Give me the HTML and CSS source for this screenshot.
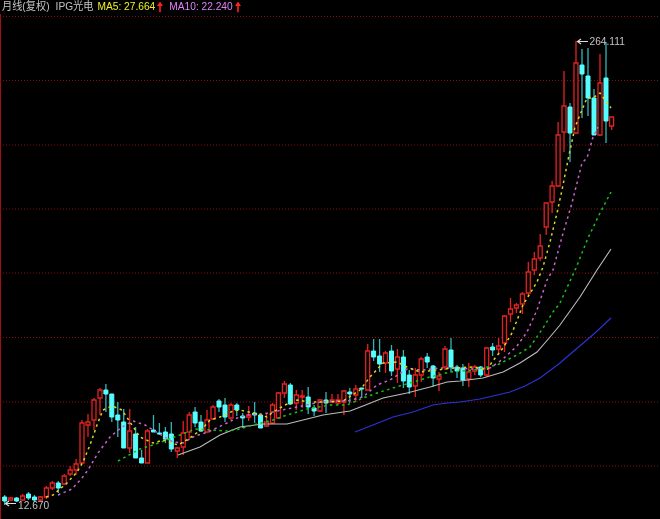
FILE: index.html
```html
<!DOCTYPE html>
<html lang="zh">
<head>
<meta charset="utf-8">
<title>IPG光电 月线</title>
<link rel="stylesheet" href="styles.css">
</head>
<body>
<main class="chart">
  <svg class="plot" width="660" height="519" viewBox="0 0 660 519">
    <path class="axis" d="M0.5 14V519"/>
    <path class="grid" d="M0 16.5H660M0 80.5H660M0 145H660M0 209H660M0 273H660M0 337.5H660M0 402H660M0 466H660"/>
    <path class="wick-up" d="M10.7 497V501M22.6 494V501M40.4 496V501M46.4 486V499M52.3 481V490M64.2 474V485M70.2 466V476M76.1 459V475M82 420V464M88 414V437M94 398V430M100 388V415M129.7 409V453M147.5 429V463M177.3 447V458M183.2 421V455M189.2 412V440M207 410V433M213 405V420M231 403V420M248.7 406V421M266.5 414V427M272.5 403V424M278.4 392V419M284.4 381V398M296.3 390V410M302.2 390V408M320 399V412M332 394V403M338 394V405M343.9 390V415M355.8 385V402M367.7 344V390M385.5 351V373M397.4 349V383M415.3 368V397M421.2 357V382M439 372V391M445 346V370M468.8 363V387M474.8 365V375M486.7 347V377M498.6 338V355M504.5 315V352M510.5 298V322M516.4 303V313M522.4 292V314M528.3 262V297M534.3 252V275M540.2 234V261M546.2 203V235M552.1 181V213M558.1 122V187M564 71V152M576 41V134M600 54V136M611.6 117V130"/>
    <path class="wick-down" d="M4.7 495V505M16.6 497V502M28.5 492V500M34.5 495V502M58.3 481V493M105.9 384V412M111.8 394V422M117.8 402V437M123.7 409V448M135.6 427V458M141.6 450V463M153.5 415V432M159.4 423V435M165.4 427V443M171.3 422V452M195.1 407V427M201 415V432M219 399V412M225 398V422M236.8 403V416M242.7 413V428M254.6 402V423M260.6 413V428M290.3 383V405M308.2 387V414M314.1 405V416M326 392V413M349.8 388V403M361.7 388V398M373.6 339V361M379.6 339V372M391.5 345V376M403.4 350V388M409.3 370V394M427.2 353V368M433.1 365V387M451 338V372M457 365V378M462.9 364V386M480.7 366V377M492.6 343V356M570 103V162M582 49V118M588 48V116M594 89V135M606 42V143"/>
    <path class="body-up" d="M8.7 498h4v2h-4zM20.6 496h4v4h-4zM38.4 497h4v3h-4zM44.4 488h4v9h-4zM50.3 483h4v5h-4zM62.2 476h4v8h-4zM68.2 470h4v4h-4zM74.1 464h4v6h-4zM80 423h4v40h-4zM86 422h4v3h-4zM92 400h4v20h-4zM98 390h4v8h-4zM127.7 431h4v17h-4zM145.5 431h4v32h-4zM175.3 448h4v3h-4zM181.2 433h4v14h-4zM187.2 415h4v17h-4zM205 420h4v12h-4zM211 407h4v12h-4zM229 405h4v13h-4zM246.7 415h4v2h-4zM264.5 422h4v4h-4zM270.5 405h4v18h-4zM276.4 393h4v25h-4zM282.4 384h4v9h-4zM294.3 395h4v8h-4zM300.2 396h4v1h-4zM318 400h4v11h-4zM330 400h4v2h-4zM336 400h4v3h-4zM341.9 391h4v11h-4zM353.8 389h4v6h-4zM365.7 351h4v39h-4zM383.5 353h4v10h-4zM395.4 357h4v12h-4zM413.3 375h4v11h-4zM419.2 359h4v16h-4zM437 376h4v3h-4zM443 349h4v18h-4zM466.8 372h4v7h-4zM472.8 367h4v4h-4zM484.7 348h4v27h-4zM496.6 346h4v3h-4zM502.5 316h4v27h-4zM508.5 309h4v5h-4zM514.4 305h4v3h-4zM520.4 294h4v10h-4zM526.3 272h4v21h-4zM532.3 259h4v11h-4zM538.2 246h4v12h-4zM544.2 203h4v24h-4zM550.1 186h4v16h-4zM556.1 135h4v51h-4zM562 106h4v26h-4zM574 63h4v70h-4zM598 83h4v52h-4zM609.6 117h4v9h-4z"/>
    <path class="body-down" d="M2.7 497h4v4h-4zM14.6 498h4v3h-4zM26.5 494h4v4h-4zM32.5 497h4v3h-4zM56.3 483h4v5h-4zM103.9 390h4v4h-4zM109.8 394h4v23h-4zM115.8 415h4v5h-4zM121.7 422h4v26h-4zM133.6 434h4v24h-4zM139.6 458h4v5h-4zM151.5 430h4v2h-4zM157.4 433h4v1h-4zM163.4 432h4v7h-4zM169.3 434h4v15h-4zM193.1 412h4v11h-4zM199 422h4v9h-4zM217 401h4v6h-4zM223 405h4v12h-4zM234.8 405h4v5h-4zM240.7 416h4v2h-4zM252.6 413h4v2h-4zM258.6 415h4v13h-4zM288.3 385h4v19h-4zM306.2 397h4v10h-4zM312.1 408h4v3h-4zM324 400h4v3h-4zM347.8 392h4v2h-4zM359.7 388h4v1h-4zM371.6 351h4v6h-4zM377.6 356h4v8h-4zM389.5 351h4v20h-4zM401.4 357h4v24h-4zM407.3 375h4v12h-4zM425.2 357h4v5h-4zM431.1 366h4v12h-4zM449 350h4v17h-4zM455 367h4v4h-4zM460.9 368h4v12h-4zM478.7 367h4v8h-4zM490.6 347h4v3h-4zM568 107h4v26h-4zM580 65h4v9h-4zM586 76h4v22h-4zM592 98h4v37h-4zM604 78h4v43h-4z"/>
    <polyline class="line ma60" points="355,432 373,425 393,417 413,412 433,405 447,403 460,402 480,399 510,392 525,386 540,378 560,363 575,350 595,333 611,318"/>
    <polyline class="line ma30" points="178,455 200,447 220,435 240,427 263,424 287,424 303,420 323,415 350,411 363,406 383,398 407,393 430,387 447,382 460,381 483,378 503,372 520,363 537,352 550,337 560,325 580,297 597,270 611,249"/>
    <polyline class="line dash ma20" points="118,461 140,449 153,445 180,435 195,429 210,430 227,431 240,429 253,425 273,420 287,415 307,409 330,405 347,405 363,398 377,393 393,388 413,382 430,377 450,372 473,370 497,365 517,355 530,347 543,328 553,312 560,303 576,268 588,238 600,213 611,192"/>
    <polyline class="line dash ma10" points="58,495 72,489 82,478 88,470 98,453 110,437 122,427 133,421 145,425 158,433 173,442 183,443 195,436 208,432 227,423 237,418 247,415 263,414 273,412 287,409 302,406 320,402 337,401 347,401 363,397 377,385 390,380 407,369 423,370 440,368 453,368 473,369 490,368 503,359 517,346 527,332 537,310 547,280 553,270 562,237 572,203 582,163 587,158 593,137 598,127"/>
    <polyline class="line dash ma5" points="46,497 53,495 67,483 77,472 83,462 90,445 97,425 103,410 112,406 122,410 130,422 140,437 153,443 163,440 178,445 190,438 203,428 210,420 220,417 233,411 240,410 253,413 267,417 273,412 285,405 297,400 310,402 327,402 343,401 360,390 370,377 383,363 397,362 407,367 420,372 437,370 453,368 473,367 487,370 492,362 503,348 512,333 523,305 537,282 543,267 550,242 557,213 562,190 568,160 575,127 582,110 587,98 593,98 600,93 605,100 611,108"/>
    <path class="pointer" d="M588 41.5H578M581 39L577.5 41.5L581 44M16 503.5H6M9 501L5.5 503.5L9 506"/>
    <text class="price" x="589.5" y="45">264.111</text>
    <text class="price" x="18" y="509">12.670</text>
  </svg>
  <header class="legend">
    <span class="name">月线(复权)</span>
    <span class="name stock">IPG光电</span>
    <span class="ma ma5-label">MA5: 27.664<svg class="up" width="6" height="10" viewBox="0 0 6 10"><path d="M3 0L6 4H3.8V10H2.2V4H0z"/></svg></span>
    <span class="ma ma10-label">MA10: 22.240<svg class="up" width="6" height="10" viewBox="0 0 6 10"><path d="M3 0L6 4H3.8V10H2.2V4H0z"/></svg></span>
  </header>
</main>
</body>
</html>
```
FILE: styles.css
```css
html, body {
  margin: 0;
  padding: 0;
  background: #000;
}

.chart {
  position: relative;
  width: 660px;
  height: 519px;
  overflow: hidden;
  background: #000;
  font-family: "Liberation Sans", "Noto Sans CJK SC", sans-serif;
  filter: blur(0.3px);
}

.legend {
  position: absolute;
  top: 0;
  left: 2px;
  display: flex;
  align-items: center;
  gap: 4px;
  height: 14px;
  font-size: 10.2px;
  line-height: 14px;
  white-space: nowrap;
  transform-origin: left center;
  transform: scaleY(1.1);
}

.name {
  color: #c4c4c4;
}

.stock {
  margin-left: 2px;
}

.ma {
  display: flex;
  align-items: center;
  gap: 2px;
}

.ma5-label {
  color: #f0f020;
}

.ma10-label {
  color: #e080f8;
  margin-left: 2px;
}

.up {
  display: block;
  fill: #ff2020;
}

.plot {
  display: block;
}

.axis {
  stroke: #a01010;
  stroke-width: 1;
  fill: none;
}

.grid {
  stroke: #8c0f0f;
  stroke-width: 1;
  stroke-dasharray: 1 2;
  fill: none;
}

.wick-up {
  stroke: #e62020;
  stroke-width: 1.3;
  fill: none;
}

.wick-down {
  stroke: #35b4b8;
  stroke-width: 1.3;
  fill: none;
}

.body-up {
  stroke: #e62020;
  stroke-width: 1.3;
  fill: #000;
}

.body-down {
  stroke: #55ffff;
  stroke-width: 1;
  fill: #55ffff;
}

.line {
  fill: none;
  stroke-width: 1.1;
}

.dash {
  stroke-dasharray: 2.5 3.5;
  stroke-width: 1.5;
}

.ma5 { stroke: #d8d820; }
.ma10 { stroke: #c864c8; }
.ma20 { stroke: #14c414; }
.ma30 { stroke: #bcbcbc; }
.ma60 { stroke: #2c34d8; }

.pointer {
  fill: none;
  stroke: #dcdcdc;
  stroke-width: 1.2;
}

.price {
  fill: #c4c4c4;
  font-size: 10.2px;
  font-family: "Liberation Sans", sans-serif;
  transform-box: fill-box;
  transform-origin: left bottom;
  transform: scaleY(1.15);
}
```
